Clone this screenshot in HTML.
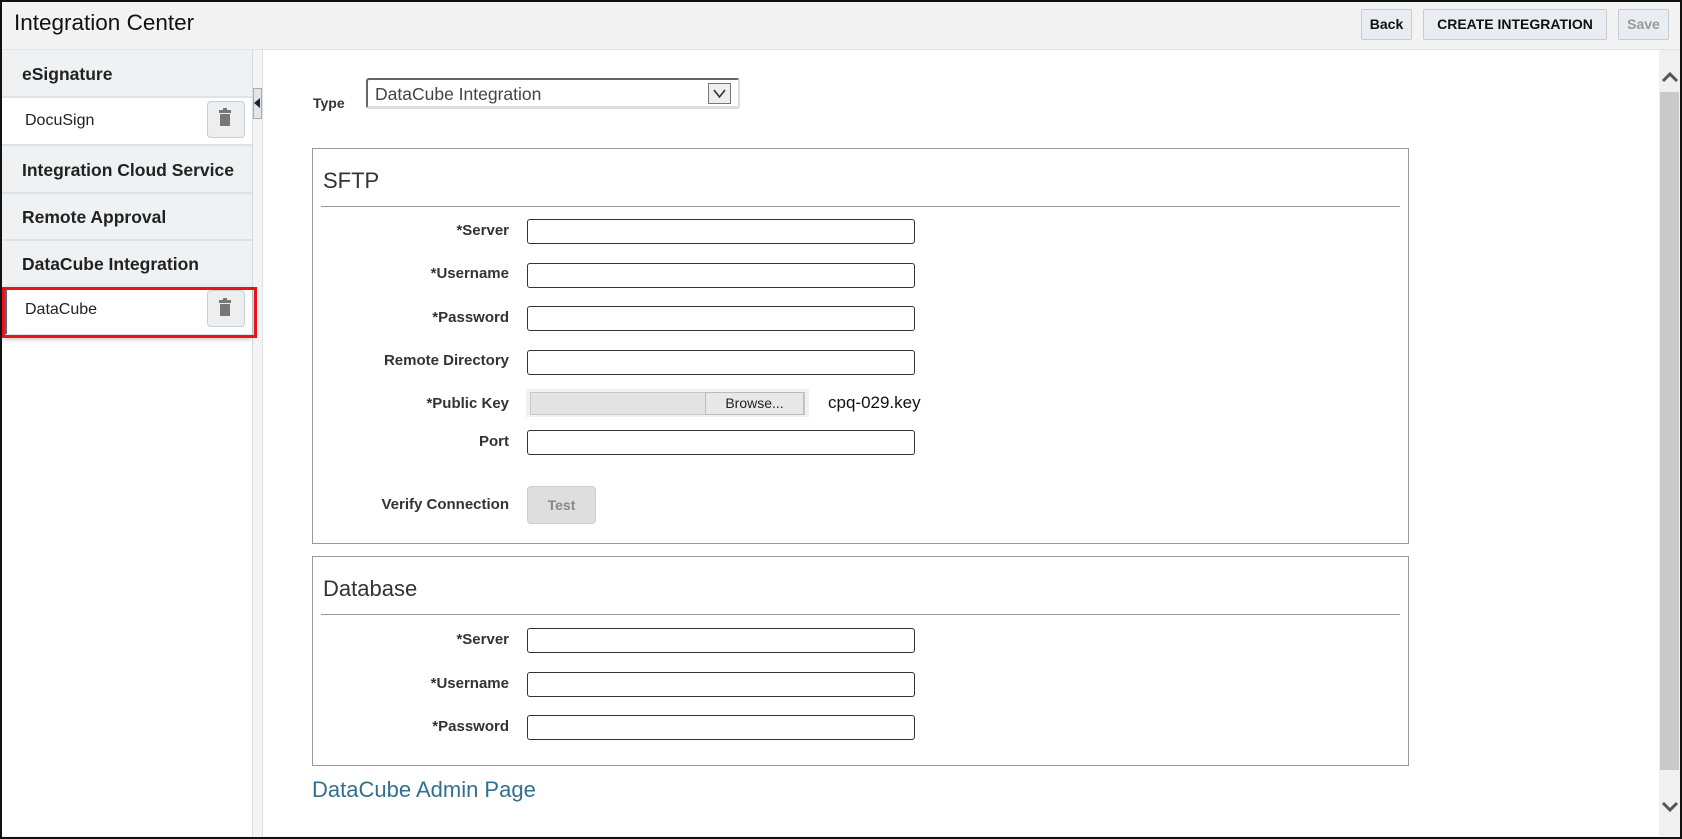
<!DOCTYPE html>
<html><head><meta charset="utf-8"><style>
*{box-sizing:border-box;margin:0;padding:0}
body{width:1682px;height:839px;position:relative;overflow:hidden;background:#f4f4f4;font-family:"Liberation Sans",Arial,sans-serif;color:#222}
.a{position:absolute}
.frame{left:0;top:0;width:1682px;height:839px;border:2px solid #111;pointer-events:none;z-index:10}
.btn{position:absolute;top:9px;height:31px;border:1px solid #c4ccd4;border-radius:2px;background:#e9edf1;font-weight:bold;font-size:14px;line-height:29px;text-align:center;color:#111}
.side{left:2px;top:50px;width:251px;height:786px;background:#fff;border-right:1px solid #d6dde3}
.hd{position:absolute;left:2px;width:250px;background:#eff1f3;border-bottom:2px solid #dde3e8;font-weight:bold;font-size:17.5px;color:#222;padding-left:20px}
.it{position:absolute;left:2px;width:250px;background:#fff;border-bottom:2px solid #dde3e8;font-size:16px;padding-left:23px}
.trash{position:absolute;left:205px;width:38px;height:37px;border:1px solid #c8ced3;border-radius:4px;background:#eceeef}
.lbl{position:absolute;width:250px;text-align:right;font-weight:bold;font-size:15px;color:#333}
.in{position:absolute;left:527px;width:388px;height:25px;border:1px solid #333;border-radius:3px;background:#fff}
.box{position:absolute;left:312px;width:1097px;border:1px solid #999;background:#fff}
.tt{position:absolute;left:10px;font-size:22px;color:#333}
.rule{position:absolute;left:8px;right:8px;height:1px;background:#999}
</style></head><body>
<div class="a" style="left:0;top:0;width:1682px;height:50px;background:#f3f3f3;border-bottom:1px solid #dde2e6"></div>
<div class="a" style="left:14px;top:10px;font-size:22.5px;color:#111">Integration Center</div>
<div class="btn" style="left:1361px;width:51px">Back</div>
<div class="btn" style="left:1423px;width:184px">CREATE INTEGRATION</div>
<div class="btn" style="left:1618px;width:51px;color:#999">Save</div>

<div class="a side"></div>
<div class="hd" style="top:50px;height:48px;line-height:48px">eSignature</div>
<div class="it" style="top:98px;height:48px;line-height:46px">DocuSign<div class="trash" style="top:3px"></div></div>
<div class="hd" style="top:146px;height:48px;line-height:48px">Integration Cloud Service</div>
<div class="hd" style="top:194px;height:47px;line-height:47px">Remote Approval</div>
<div class="hd" style="top:241px;height:46px;line-height:46px;border-bottom:none">DataCube Integration</div>
<div class="it" style="top:288px;height:48px;line-height:44px;box-shadow:0 2px 6px rgba(0,0,0,.35)">DataCube<div class="trash" style="top:2px"></div></div>
<div class="a" style="left:5px;top:290px;width:2px;height:44px;background:#4a6a90"></div>
<div class="a" style="left:2px;top:287px;width:255px;height:51px;border:3px solid #e8141a"></div>
<div class="a" style="left:253px;top:88px;width:9px;height:31px;background:#e3e6e8;border:1px solid #aab"></div>
<div class="a" style="left:254px;top:98px;width:0;height:0;border-top:5px solid transparent;border-bottom:5px solid transparent;border-right:6px solid #222"></div>
<svg class="a" style="left:219px;top:108px" width="12" height="18" viewBox="0 0 12 18"><rect x="4" y="0" width="4" height="3" fill="#777"/><rect x="0" y="2" width="12" height="3" fill="#777"/><rect x="1" y="6" width="10" height="12" fill="#777"/></svg>
<svg class="a" style="left:219px;top:298px" width="12" height="18" viewBox="0 0 12 18"><rect x="4" y="0" width="4" height="3" fill="#777"/><rect x="0" y="2" width="12" height="3" fill="#777"/><rect x="1" y="6" width="10" height="12" fill="#777"/></svg>

<div class="a" style="left:262px;top:50px;width:1418px;height:786px;background:#fff;border-left:1px solid #dde2e6"></div>
<div class="a" style="left:1659px;top:50px;width:21px;height:786px;background:#f0f0f0"></div>
<div class="a" style="left:1660px;top:92px;width:19px;height:678px;background:#c9c9c9"></div>
<svg class="a" style="left:1660px;top:70px" width="20" height="14"><path d="M3 11 L10 4 L17 11" stroke="#555" stroke-width="3" fill="none"/></svg>
<svg class="a" style="left:1660px;top:800px" width="20" height="14"><path d="M3 3 L10 10 L17 3" stroke="#555" stroke-width="3" fill="none"/></svg>

<div class="a" style="left:313px;top:95px;font-weight:bold;font-size:14px;color:#333">Type</div>
<div class="a" style="left:366px;top:78px;width:374px;height:31px;border:2px solid #666;border-right-color:#ddd;border-bottom:3px solid #ddd;border-radius:3px;background:#fff"></div>
<div class="a" style="left:375px;top:84px;font-size:17.5px;color:#444">DataCube Integration</div>
<div class="a" style="left:708px;top:83px;width:23px;height:21px;border:1px solid #777;background:#eee"></div>
<svg class="a" style="left:712px;top:86px" width="15" height="15"><path d="M2 4 L7.5 11 L13 4" stroke="#333" stroke-width="1.6" fill="none"/></svg>

<div class="box" style="top:148px;height:396px">
 <div class="tt" style="top:19px">SFTP</div>
 <div class="rule" style="top:57px"></div>
</div>
<div class="lbl" style="left:259px;top:222px">*Server</div><div class="in" style="top:219px"></div>
<div class="lbl" style="left:259px;top:265px">*Username</div><div class="in" style="top:263px"></div>
<div class="lbl" style="left:259px;top:309px">*Password</div><div class="in" style="top:306px"></div>
<div class="lbl" style="left:259px;top:352px">Remote Directory</div><div class="in" style="top:350px"></div>
<div class="lbl" style="left:259px;top:395px">*Public Key</div>
<div class="a" style="left:526px;top:389px;width:283px;height:28px;background:#f0f0f0"></div>
<div class="a" style="left:530px;top:392px;width:275px;height:23px;background:#e4e4e4;border:1px solid #c8c8c8"></div>
<div class="a" style="left:705px;top:392px;width:99px;height:23px;background:#e8e8e8;border:1px solid #bbb;font-size:14px;text-align:center;line-height:21px;color:#222">Browse...</div>
<div class="a" style="left:828px;top:393px;font-size:17px;color:#111">cpq-029.key</div>
<div class="lbl" style="left:259px;top:433px">Port</div><div class="in" style="top:430px"></div>
<div class="lbl" style="left:259px;top:496px">Verify Connection</div>
<div class="a" style="left:527px;top:486px;width:69px;height:38px;background:#dedede;border:1px solid #c9cfd5;border-radius:4px;font-weight:bold;font-size:14px;color:#888;text-align:center;line-height:36px">Test</div>

<div class="box" style="top:556px;height:210px">
 <div class="tt" style="top:19px">Database</div>
 <div class="rule" style="top:57px"></div>
</div>
<div class="lbl" style="left:259px;top:631px">*Server</div><div class="in" style="top:628px"></div>
<div class="lbl" style="left:259px;top:675px">*Username</div><div class="in" style="top:672px"></div>
<div class="lbl" style="left:259px;top:718px">*Password</div><div class="in" style="top:715px"></div>

<div class="a" style="left:312px;top:777px;font-size:22px;color:#31708f">DataCube Admin Page</div>
<div class="a frame"></div>
</body></html>
